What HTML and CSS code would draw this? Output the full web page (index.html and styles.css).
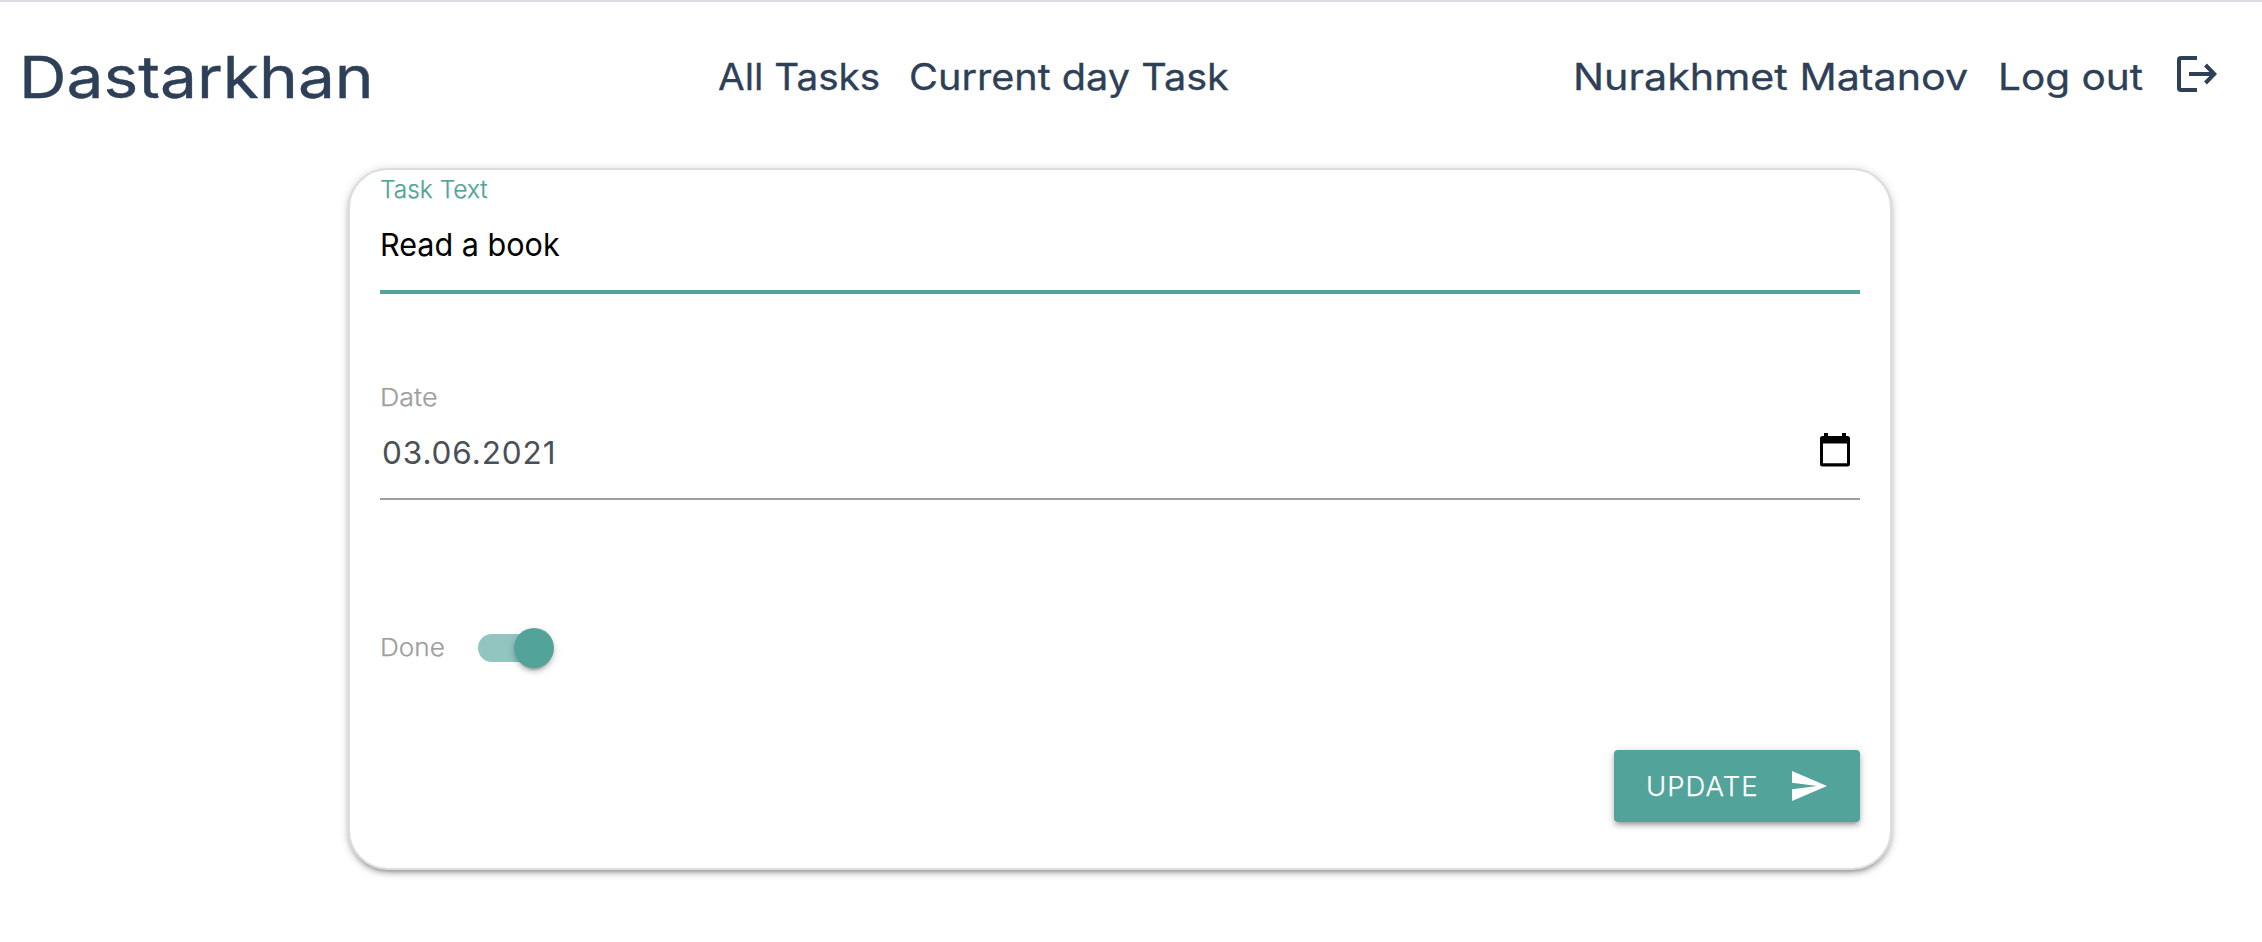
FILE: index.html
```html
<!DOCTYPE html>
<html lang="en">
<head>
<meta charset="utf-8">
<title>Dastarkhan</title>
<link rel="stylesheet" href="styles.css">
</head>
<body>
<header class="header">
  <a class="logo">Dastarkhan</a>
  <nav class="nav">
    <a class="link link-all">All Tasks</a>
    <a class="link link-day">Current day Task</a>
  </nav>
  <div class="user">
    <span class="link link-name">Nurakhmet Matanov</span>
    <a class="link link-out">Log out</a>
    <svg class="logout-icon" viewBox="0 0 40 36"><path d="M20 2H4a2 2 0 0 0-2 2v28a2 2 0 0 0 2 2h16" fill="none" stroke="currentColor" stroke-width="4"/><path d="M12 18h25M28.500 9l8.700 9-8.700 9" fill="none" stroke="currentColor" stroke-width="4"/></svg>
  </div>
</header>
<main class="card">
  <div class="field field-active">
    <span class="label label-text">Task Text</span>
    <div class="control"><span class="value value-text">Read a book</span></div>
  </div>
  <div class="field">
    <span class="label label-date">Date</span>
    <div class="control">
      <span class="value value-date">03.06.2021</span>
      <svg class="calendar-icon" viewBox="0 0 30 34"><path fill-rule="evenodd" d="M4 0h4v3h14V0h4v3h1.500A2.500 2.500 0 0 1 30 5.500V31a2.500 2.500 0 0 1-2.500 2.500h-25A2.500 2.500 0 0 1 0 31V5.500A2.500 2.500 0 0 1 2.500 3H4zM3 10.500V30.200h24V10.500z"/></svg>
    </div>
  </div>
  <div class="done">
    <span class="label label-done">Done</span>
    <span class="switch"><span class="knob"></span></span>
  </div>
  <button class="update"><span class="update-text">UPDATE</span><svg class="send-icon" viewBox="2 3 21 18"><path d="M2.010 21 23 12 2.010 3 2 10l15 2-15 2z" fill="currentColor"/></svg></button>
</main>
</body>
</html>
```
FILE: styles.css
```css
* { box-sizing: border-box; }
body {
  margin: 0;
  min-height: 942px;
  background: #fff;
  font-family: Inter, "Open Sans", sans-serif;
  white-space: nowrap;
}
.header {
  display: flex;
  justify-content: space-between;
  align-items: center;
  height: 152px;
  padding: 0 44px 0 20px;
  border-top: 2px solid #dbdae0;
  color: #2e4057;
  font-weight: 400;
}
/* Widened letterforms for the heading and links */
.logo, .link, .label, .value { transform-origin: 0 50%; }
.logo {
  width: 353px;
  margin-left: -1px;
  font-size: 58px;
  transform: scaleX(1.135);
  -webkit-text-stroke: .4px currentColor;
}
.nav, .user { display: flex; align-items: center; }
.nav { width: 510px; }
.user { width: 645px; }
.link { font-size: 36.5px; -webkit-text-stroke: .3px currentColor; }
.link-all { width: 191px; transform: scaleX(1.06); }
.link-day { transform: scaleX(1.086); }
.link-name { width: 425px; transform: scaleX(1.13); }
.link-out { width: 179px; transform: scaleX(1.11); }
.logout-icon { width: 40px; height: 36px; margin-top: -6px; }
.card {
  display: flex;
  flex-direction: column;
  width: 1544px;
  height: 702px;
  margin: 16px 0 0 348px;
  padding: 5px 30px 0;
  border: 2px solid #ddd;
  border-radius: 40px;
  background: #fff;
  box-shadow: 0 4px 4px 0 rgba(0,0,0,.14), 0 6px 2px -4px rgba(0,0,0,.12), 0 2px 10px 0 rgba(0,0,0,.2);
}
.field { margin-bottom: 128px; }
.field-active { margin-bottom: 89px; }
.label {
  display: block;
  width: max-content;
  height: 30px;
  line-height: 30px;
  font-size: 24px;
  font-weight: 300;
  color: #9e9e9e;
  -webkit-text-stroke: .25px currentColor;
}
.label-text { transform: scaleX(1.02); }
.label-date { transform: scaleX(1.12); }
.control {
  display: flex;
  align-items: center;
  justify-content: space-between;
  height: 87px;
  padding: 0 10px 7px 0;
  border-bottom: 2px solid #9e9e9e;
}
.value { font-size: 31.5px; }
.value-text { color: #000; transform: scaleX(.97); }
.value-date { padding-left: 2px; color: #495057; letter-spacing: .9px; }
.field-active .label { color: #52a399; }
.field-active .control { height: 89px; border-bottom: 4px solid #52a399; }
.calendar-icon { width: 30px; height: 34px; margin-top: -5px; }
.done { display: flex; align-items: center; height: 40px; }
.label-done { width: 98px; transform: scaleX(1.09); }
.switch {
  display: flex;
  align-items: center;
  justify-content: flex-end;
  width: 72px;
  height: 28px;
  border-radius: 30px;
  background: #92c5c0;
}
.knob {
  flex: none;
  width: 40px;
  height: 40px;
  margin-right: -4px;
  border-radius: 50%;
  background: #52a399;
  box-shadow: 0 6px 2px -4px rgba(0,0,0,.2), 0 2px 10px 0 rgba(0,0,0,.12), 0 4px 4px 0 rgba(0,0,0,.14);
}
.update {
  display: flex;
  align-items: center;
  justify-content: space-between;
  align-self: flex-end;
  width: 246px;
  height: 72px;
  margin-top: 82px;
  padding: 0 33px 0 32px;
  border: 0;
  border-radius: 4px;
  background: #52a399;
  color: #fff;
  font: 300 27.500px Inter, sans-serif;
  -webkit-text-stroke: .25px currentColor;
  letter-spacing: 1px;
  box-shadow: 0 4px 4px 0 rgba(0,0,0,.14), 0 6px 2px -4px rgba(0,0,0,.12), 0 2px 10px 0 rgba(0,0,0,.2);
}
.send-icon { width: 35px; height: 30px; }
```
